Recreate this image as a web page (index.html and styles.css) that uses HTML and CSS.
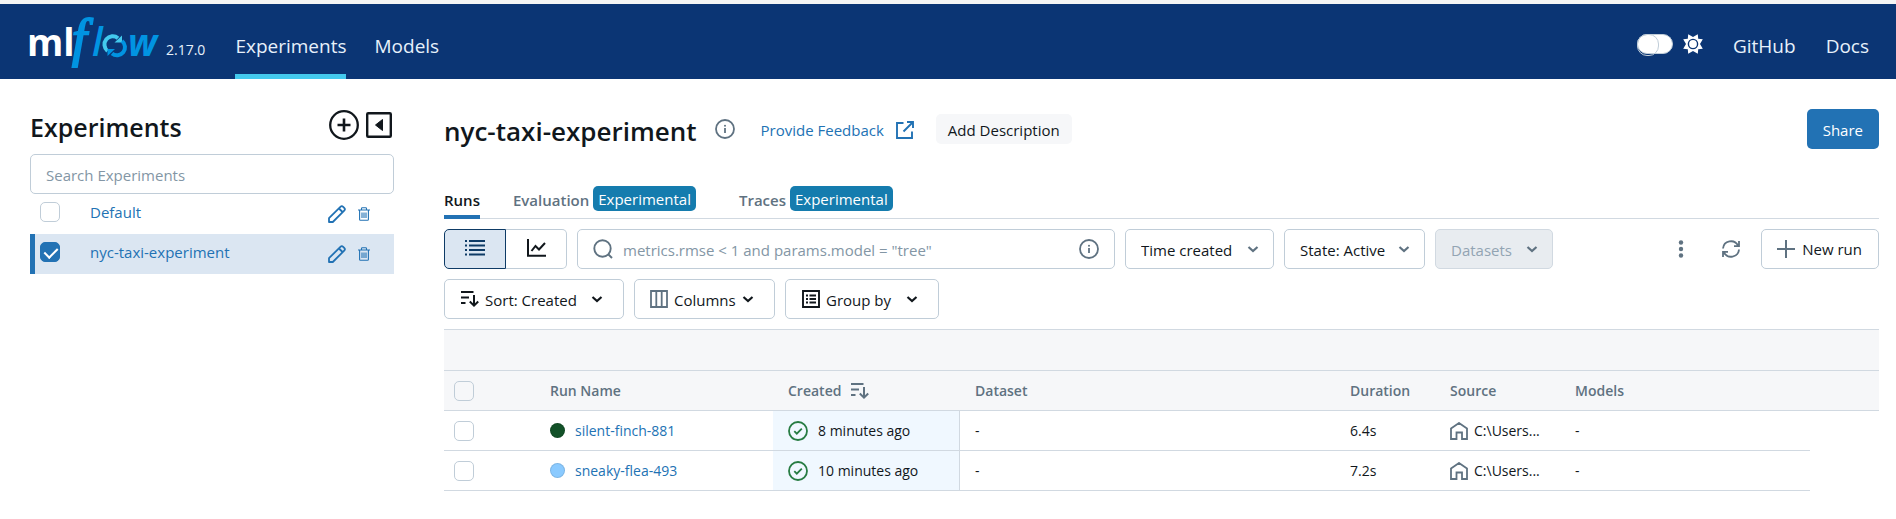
FILE: index.html
```html
<!DOCTYPE html>
<html lang="en">
<head>
<meta charset="utf-8">
<title>MLflow</title>
<link rel="stylesheet" href="styles.css">
</head>
<body>
<svg class="defs" aria-hidden="true">
  <symbol id="chevron" viewBox="0 0 12 12"><path d="M1.500 4 6 8l4.500-4" fill="none" stroke="currentColor" stroke-width="2.200"/></symbol>
  <symbol id="info" viewBox="0 0 20 20"><circle cx="10" cy="10" r="9" fill="none" stroke="currentColor" stroke-width="1.800"/><path d="M10 9v5" stroke="currentColor" stroke-width="1.800"/><circle cx="10" cy="6.800" r="1" fill="currentColor"/></symbol>
  <symbol id="pencil" viewBox="0 0 18 18"><path d="M1 17v-3.800L12.400 1.800a2 2 0 0 1 2.800 0l1 1a2 2 0 0 1 0 2.800L4.800 17zM11 3.500 14.500 7" fill="none" stroke="currentColor" stroke-width="1.800" stroke-linejoin="round"/></symbol>
  <symbol id="trash" viewBox="0 0 12 14"><path d="M0 3h12M3.500 3V1.500Q3.500.7 4.300.7h3.400q.8 0 .8.800V3M1.600 3v9.500q0 .8.800.8h7.200q.8 0 .8-.8V3M4 5.500V11M6 5.500V11M8 5.500V11" fill="none" stroke="currentColor" stroke-width="1.100"/></symbol>
  <symbol id="sort" viewBox="0 0 18 18"><path d="M0 2h12.500M0 7.500h8M0 13h4.500" fill="none" stroke="currentColor" stroke-width="2"/><path d="M13 5v10.500M8.800 11.500l4.200 4.200 4.200-4.200" fill="none" stroke="currentColor" stroke-width="2"/></symbol>
  <symbol id="home" viewBox="0 0 18 18"><path d="M1 17V6.500L9 1l8 5.500V17h-5v-6.500H6.500V17z" fill="none" stroke="currentColor" stroke-width="1.800"/></symbol>
  <symbol id="done" viewBox="0 0 20 20"><circle cx="10" cy="10" r="9" fill="none" stroke="currentColor" stroke-width="1.800"/><path d="m6.300 10.200 2.500 2.500 5-5" fill="none" stroke="currentColor" stroke-width="1.800"/></symbol>
</svg>

<header class="topbar">
  <a class="brand" href="#" aria-label="MLflow home">
    <svg class="logo" viewBox="0 0 132 56">
      <text class="logo-ml" x="-3" y="43">ml</text>
      <text class="logo-f" x="42" y="43">f</text>
      <text class="logo-l" x="62" y="43">l</text>
      <path d="M77.500 38A8 8 0 0 1 88 25.200" fill="none" stroke="#43c9ed" stroke-width="4"/>
      <path d="M84.500 29.500h7.500V22.500z" fill="#43c9ed"/>
      <path d="M92 28A8 8 0 0 1 82 40.500" fill="none" stroke="#0194e2" stroke-width="4"/>
      <path d="M85 36h-7.500V43z" fill="#0194e2"/>
      <text class="logo-w" x="98" y="43">w</text>
    </svg>
    <span class="version">2.17.0</span>
  </a>
  <nav class="nav">
    <a class="nav-link active" href="#">Experiments</a>
    <a class="nav-link" href="#">Models</a>
  </nav>
  <div class="top-right">
    <label class="theme"><input type="checkbox" class="switch" aria-label="Dark theme">
      <svg class="i20" viewBox="0 0 20 20"><path fill="#fff" d="M10 3 14.800.2 15.200 4.800 19.800 5.200 17 10l2.800 4.800-4.600.4-.4 4.600L10 17l-4.800 2.800-.4-4.600-4.600-.4L3 10 .2 5.200l4.600-.4.4-4.600z"/><circle cx="10" cy="10" r="4.600" fill="#fff" stroke="#0b3574" stroke-width="1.400"/></svg>
    </label>
    <a class="nav-link" href="#">GitHub</a>
    <a class="nav-link" href="#">Docs</a>
  </div>
</header>

<div class="page">
  <aside class="sidebar">
    <div class="side-head">
      <h2>Experiments</h2>
      <button class="bare" aria-label="New experiment"><svg class="i30" viewBox="0 0 30 30"><circle cx="15" cy="15" r="13.800" fill="none" stroke="currentColor" stroke-width="2.300"/><path d="M15 8.500v13M8.500 15h13" stroke="currentColor" stroke-width="2.600"/></svg></button>
      <button class="bare" aria-label="Collapse"><svg class="i26" viewBox="0 0 26 26"><rect x="1.200" y="1.200" width="23.600" height="23.600" rx="1" fill="none" stroke="currentColor" stroke-width="2.400"/><path d="M16.500 7.500v11L9.500 13z" fill="currentColor" stroke="currentColor" stroke-linejoin="round"/></svg></button>
    </div>
    <input class="field" type="text" placeholder="Search Experiments" aria-label="Search Experiments">
    <div class="exp">
      <input class="check" type="checkbox" id="e0"><label class="link" for="e0">Default</label>
      <button class="bare link" aria-label="Rename"><svg class="i18"><use href="#pencil"/></svg></button>
      <button class="bare link" aria-label="Delete"><svg class="trash"><use href="#trash"/></svg></button>
    </div>
    <div class="exp selected">
      <input class="check" type="checkbox" id="e1" checked><label class="link" for="e1">nyc-taxi-experiment</label>
      <button class="bare link" aria-label="Rename"><svg class="i18"><use href="#pencil"/></svg></button>
      <button class="bare link" aria-label="Delete"><svg class="trash"><use href="#trash"/></svg></button>
    </div>
  </aside>

  <main class="main">
    <div class="title-row">
      <h1>nyc-taxi-experiment</h1>
      <svg class="i20 grey"><use href="#info"/></svg>
      <a class="feedback" href="#">Provide Feedback
        <svg class="i18" viewBox="0 0 18 18"><path d="M7.500 2H1v15h15v-6.500M11 1h6v6M17 1 7.500 10.500" fill="none" stroke="currentColor" stroke-width="1.900"/></svg></a>
      <button class="describe">Add Description</button>
      <button class="share">Share</button>
    </div>

    <nav class="tabs">
      <a class="tab current" href="#">Runs</a>
      <a class="tab" href="#">Evaluation <span class="badge">Experimental</span></a>
      <a class="tab" href="#">Traces <span class="badge">Experimental</span></a>
    </nav>

    <div class="tools">
      <div class="toggle">
        <button class="seg on" aria-label="Table view"><svg class="seg-icon" viewBox="0 0 20 18"><path d="M4 2h16M4 6.500h16M4 11h16M4 15.500h16M0 2h2M0 6.500h2M0 11h2M0 15.500h2" stroke="currentColor" stroke-width="1.900"/></svg></button>
        <button class="seg" aria-label="Chart view"><svg class="seg-icon" viewBox="0 0 20 18"><path d="M2 0v16.800h18M5.500 12l4-5 3.500 3.500L19 4" fill="none" stroke="currentColor" stroke-width="2"/></svg></button>
      </div>
      <div class="search">
        <svg class="i20" viewBox="0 0 20 20"><circle cx="9.500" cy="9.500" r="8.200" fill="none" stroke="currentColor" stroke-width="1.900"/><path d="m15 15 4 4" stroke="currentColor" stroke-width="1.900"/></svg>
        <input type="text" aria-label="Search runs" placeholder="metrics.rmse &lt; 1 and params.model = &quot;tree&quot;">
        <svg class="i20"><use href="#info"/></svg>
      </div>
      <label class="pick grey-arrow"><select aria-label="Time"><option>Time created</option></select><svg class="i12"><use href="#chevron"/></svg></label>
      <label class="pick grey-arrow state"><select aria-label="State"><option>State: Active</option></select><svg class="i12"><use href="#chevron"/></svg></label>
      <label class="pick grey-arrow off"><select aria-label="Datasets" disabled><option>Datasets</option></select><svg class="i12"><use href="#chevron"/></svg></label>
      <div class="actions">
        <button class="bare grey" aria-label="More"><svg class="dots" viewBox="0 0 6 18"><circle cx="3" cy="2.500" r="2.200" fill="currentColor"/><circle cx="3" cy="9" r="2.200" fill="currentColor"/><circle cx="3" cy="15.500" r="2.200" fill="currentColor"/></svg></button>
        <button class="bare grey" aria-label="Refresh"><svg class="i18" viewBox="0 0 18 18"><path d="M1 8.500A8 8 0 0 1 16 5.500M17 9.500A8 8 0 0 1 2 12.500M17 1v5.200h-5M1 17v-5.200h5" fill="none" stroke="currentColor" stroke-width="1.800"/></svg></button>
        <button class="new-run"><svg class="i18" viewBox="0 0 18 18"><path d="M9 0v18M0 9h18" stroke="currentColor" stroke-width="2"/></svg>New run</button>
      </div>
    </div>
    <div class="tools second">
      <label class="pick sorting"><svg class="i18"><use href="#sort"/></svg><select aria-label="Sort"><option>Sort: Created</option></select><svg class="i12"><use href="#chevron"/></svg></label>
      <label class="pick columns"><svg class="i18 grey" viewBox="0 0 18 18"><path d="M1 1h16v16H1zM6.300 1v16M11.700 1v16" fill="none" stroke="currentColor" stroke-width="1.800"/></svg><select aria-label="Columns"><option>Columns</option></select><svg class="i12"><use href="#chevron"/></svg></label>
      <label class="pick group"><svg class="i18" viewBox="0 0 18 18"><path d="M1 1h16v16H1zM4 5.500h2M4 9h2M4 12.500h2M7.500 5.500H14M7.500 9H14M7.500 12.500H14" fill="none" stroke="currentColor" stroke-width="1.900"/></svg><select aria-label="Group by"><option>Group by</option></select><svg class="i12"><use href="#chevron"/></svg></label>
    </div>

    <table class="runs">
      <colgroup><col class="c-check"><col class="c-name"><col class="c-created"><col><col class="c-dur"><col class="c-src"><col class="c-models"><col class="c-end"></colgroup>
      <thead>
        <tr class="band"><th colspan="8"></th></tr>
        <tr><th><input class="check" type="checkbox" aria-label="Select all"></th><th>Run Name</th><th><span class="cell created">Created <svg class="i18"><use href="#sort"/></svg></span></th><th>Dataset</th><th>Duration</th><th>Source</th><th>Models</th><th></th></tr>
      </thead>
      <tbody>
        <tr><td><input class="check" type="checkbox" aria-label="Select silent-finch-881"></td><td><span class="cell"><i class="dot green"></i><a class="link" href="#">silent-finch-881</a></span></td><td class="when"><span class="cell"><svg class="i20 ok"><use href="#done"/></svg>8 minutes ago</span></td><td>-</td><td>6.4s</td><td><span class="cell src"><svg class="i18 grey"><use href="#home"/></svg>C:\Users...</span></td><td>-</td><td class="end"></td></tr>
        <tr><td><input class="check" type="checkbox" aria-label="Select sneaky-flea-493"></td><td><span class="cell"><i class="dot blue"></i><a class="link" href="#">sneaky-flea-493</a></span></td><td class="when"><span class="cell"><svg class="i20 ok"><use href="#done"/></svg>10 minutes ago</span></td><td>-</td><td>7.2s</td><td><span class="cell src"><svg class="i18 grey"><use href="#home"/></svg>C:\Users...</span></td><td>-</td><td class="end"></td></tr>
      </tbody>
    </table>
  </main>
</div>
</body>
</html>
```
FILE: styles.css
```css
* { box-sizing: border-box; }
body {
  margin: 0;
  border-top: 4px solid #f5f5f5;
  background: #fff;
  color: #11171c;
  font: 15px/20px "Open Sans", "Noto Sans", sans-serif;
}
button, input, select { font: inherit; color: inherit; margin: 0; }
button { cursor: pointer; }
a { text-decoration: none; color: inherit; }
svg { display: block; flex: none; }
.defs { position: absolute; width: 0; height: 0; }
.i12 { width: 12px; height: 12px; }
.i18 { width: 18px; height: 18px; }
.i20 { width: 20px; height: 20px; }
.i26 { width: 26px; height: 26px; }
.i30 { width: 30px; height: 30px; }
.trash { width: 12px; height: 14px; }
.grey { color: #5f7281; }
.link { color: #2272b4; }
.bare { padding: 0; border: 0; background: none; }
.bare.grey { color: #5f7281; }
.bare.link { color: #2272b4; }

/* Top bar */
.topbar {
  display: flex;
  height: 75px;
  padding: 0 27px 0 30px;
  background: #0b3574;
  color: #e7f1fb;
}
.brand { display: flex; align-items: flex-start; gap: 4px; padding-top: 9px; }
.logo { width: 132px; height: 56px; overflow: visible; }
.logo-ml { font: 700 37px "Open Sans", sans-serif; fill: #fff; }
.logo-f { font: italic 400 53px "Liberation Serif", serif; fill: #0194e2; stroke: #0194e2; stroke-width: 2px; }
.logo-l { font: italic 600 39px "Open Sans", sans-serif; fill: #0194e2; }
.logo-w { font: italic 700 37px "Open Sans", sans-serif; fill: #0194e2; }
.version { padding-top: 27px; font-size: 14px; }
.nav { display: flex; gap: 28px; margin-left: 30px; }
.nav-link {
  padding-top: 29px;
  border-bottom: 5px solid transparent;
  font-size: 19px;
  line-height: 26px;
}
.nav-link.active { border-color: #43c9ed; }
.top-right { display: flex; gap: 30px; margin-left: auto; }
.theme { display: flex; align-items: flex-start; gap: 10px; padding-top: 30px; }
.switch {
  appearance: none;
  width: 36px;
  height: 20px;
  border: 1px solid #c0cdd8;
  border-radius: 10px;
  background: #fff;
}
.switch::after {
  content: "";
  display: block;
  width: 20px;
  height: 20px;
  margin: -1px;
  border: 1px solid #c0cdd8;
  border-radius: 10px;
}

/* Page columns */
.page { display: flex; gap: 50px; padding: 30px 17px 0 30px; }
.sidebar { width: 364px; flex: none; }
.main { flex: 1; min-width: 0; }

/* Sidebar */
.side-head { display: flex; align-items: center; gap: 7px; height: 32px; padding-right: 2px; margin-bottom: 13px; }
.side-head h2 { flex: 1; margin: 0; padding-top: 4px; font-size: 25px; line-height: 32px; font-weight: 600; }
.field {
  display: block;
  width: 100%;
  height: 40px;
  padding: 2px 15px 0;
  border: 1px solid #c0cdd8;
  border-radius: 5px;
}
::placeholder { color: #8396a5; opacity: 1; }
.exp {
  display: flex;
  align-items: center;
  height: 40px;
  padding: 0 24px 4px 10px;
}
.exp label { flex: 1; margin-left: 30px; }
.exp button { margin: 4px 0 0 12px; }
.exp.selected { padding-left: 5px; border-left: 5px solid #2272b4; background: #dbe6f2; }
.check {
  appearance: none;
  display: block;
  width: 20px;
  height: 20px;
  border: 1px solid #c0cdd8;
  border-radius: 5px;
  background: #fff;
}
.check:checked { border-color: #2272b4; background: #2272b4; }
.check:checked::after {
  content: "";
  display: block;
  width: 6px;
  height: 11px;
  margin: 2px 0 0 6px;
  border: solid #fff;
  border-width: 0 2px 2px 0;
  transform: rotate(45deg);
}

/* Title */
.title-row { display: flex; align-items: center; height: 40px; }
.title-row h1 { margin: 0 18px 0 0; padding-top: 4px; font-size: 26px; line-height: 36px; font-weight: 600; }
.feedback { display: flex; align-items: center; gap: 12px; margin: 0 22px 0 26px; padding-top: 2px; color: #2272b4; }
.describe { height: 30px; padding: 2px 12px 0; border: 0; border-radius: 5px; background: #f6f7f9; }
.share { height: 40px; padding: 2px 16px 0; margin-left: auto; border: 0; border-radius: 5px; background: #2272b4; color: #fff; }

/* Tabs */
.tabs {
  display: flex;
  height: 40px;
  margin: 30px 0 10px;
  border-bottom: 1px solid #d1d9e1;
}
.tab { display: flex; align-items: center; gap: 4px; height: 40px; padding-top: 2px; margin-right: 43px; color: #5f7281; font-weight: 600; }
.tab.current { margin-right: 33px; border-bottom: 4px solid #2272b4; color: #11171c; padding-top: 6px; }
.badge { padding: 3px 5px 2px; margin-bottom: 4px; border-radius: 5px; background: #157cae; color: #fff; font-weight: 500; }

/* Tool rows */
.tools { display: flex; align-items: center; gap: 10px; height: 40px; }
.second { margin: 10px 0; }
.toggle { display: flex; }
.seg { display: flex; justify-content: center; align-items: center; width: 62px; height: 40px; padding: 0 0 2px; border: 1px solid #c0cdd8; background: #fff; }
.seg + .seg { border-left: 0; border-radius: 0 5px 5px 0; width: 61px; }
.seg.on { border-color: #0e3b66; border-radius: 5px 0 0 5px; background: #dbe6f2; color: #0e3b66; }
.seg-icon { width: 20px; height: 18px; }
.search {
  display: flex;
  align-items: center;
  gap: 10px;
  width: 538px;
  height: 40px;
  padding: 0 15px;
  border: 1px solid #c0cdd8;
  border-radius: 5px;
  color: #5f7281;
}
.search input { flex: 1; min-width: 0; padding: 2px 0 0; border: 0; outline: 0; background: none; }
.pick {
  display: flex;
  align-items: center;
  gap: 14px;
  height: 40px;
  padding: 0 14px 0 15px;
  border: 1px solid #c0cdd8;
  border-radius: 5px;
}
.pick select { appearance: none; padding: 2px 0 0; border: 0; background: none; opacity: 1; }
.pick .i18 { margin-right: -8px; }
.pick.columns { gap: 6px; padding-right: 20px; }
.pick.columns .i18 { margin-right: 0; }
.pick.state { gap: 12px; }
.pick.sorting, .pick.group { padding: 0 20px 0 16px; }
.grey-arrow .i12 { color: #5f7281; }
.pick.off { background: #e8ecf0; border-color: #d1d9e1; color: #92a4b3; }
.actions { display: flex; align-items: center; margin-left: auto; }
.actions .bare { margin-right: 21px; }
.actions .bare:first-child { margin-right: 38px; }
.dots { width: 6px; height: 18px; }
.new-run {
  display: flex;
  align-items: center;
  gap: 7px;
  height: 40px;
  padding: 0 16px 0 15px;
  border: 1px solid #c0cdd8;
  border-radius: 5px;
  background: #fff;
}
.new-run svg { color: #5f7281; }

/* Runs table */
.runs { width: 100%; table-layout: fixed; border-collapse: separate; border-spacing: 0; border-top: 1px solid #d1d9e1; font-size: 14px; }
.runs th, .runs td { height: 40px; padding: 0 0 0 15px; border-bottom: 1px solid #d1d9e1; text-align: left; white-space: nowrap; }
.runs th { background: #f6f7f9; color: #5f7281; font-weight: 600; }
.runs .band th { height: 41px; }
.runs th:first-child, .runs td:first-child { padding-left: 10px; }
.runs th .check { background: none; }
.runs .end { border: 0; }
.c-check { width: 91px; }
.c-name { width: 238px; }
.c-created { width: 187px; }
.c-dur { width: 100px; }
.c-src { width: 125px; }
.c-models { width: 250px; }
.c-end { width: 69px; }
.cell { display: flex; align-items: center; gap: 10px; }
.src { gap: 6px; }
.runs .when { background: #f0f8ff; border-right: 1px solid #d1d9e1; }
.ok { color: #277c43; }
.dot { width: 15px; height: 15px; border-radius: 50%; border: 1px solid rgba(0, 0, 0, 0.1); }
.green { background: #125128; }
.blue { background: #8acaff; }
```
